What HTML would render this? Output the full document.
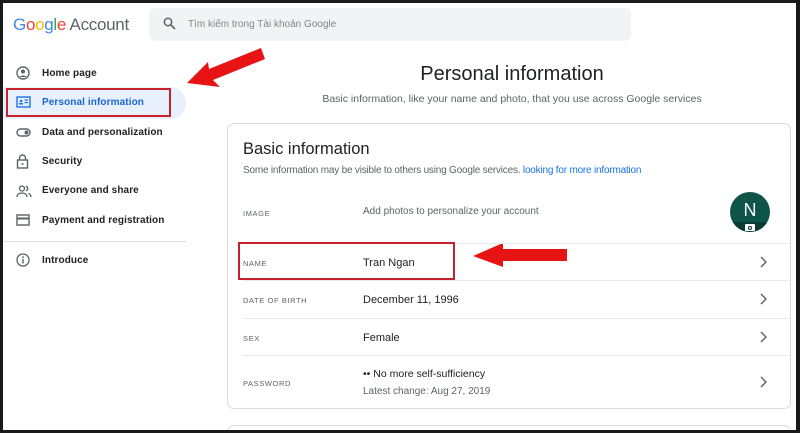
<!DOCTYPE html>
<html><head><meta charset="utf-8"><style>
*{margin:0;padding:0;box-sizing:border-box}
body{width:800px;height:433px;background:#1a1a1a;position:relative;overflow:hidden;font-family:"Liberation Sans",Arial,sans-serif;color:#202124}
#pg{position:absolute;left:3px;top:3px;width:793px;height:427px;background:#fff;overflow:hidden}
.a{position:absolute;white-space:nowrap}
.nav{position:absolute;left:39px;font-size:10px;color:#202124;font-weight:bold;letter-spacing:.1px}
.ic{position:absolute;left:13px}
.lbl{position:absolute;left:240px;font-size:7.5px;color:#5f6368;letter-spacing:.6px}
.val{position:absolute;left:360px;font-size:11px;color:#202124}
.div{position:absolute;left:240px;width:547px;height:1px;background:#e8eaed}
.chev{position:absolute;left:756px}
</style></head><body><div id="pg">
<div class="a" style="left:10px;top:12px;font-size:17px;letter-spacing:-.3px"><span style="color:#4285f4">G</span><span style="color:#ea4335">o</span><span style="color:#fbbc05">o</span><span style="color:#4285f4">g</span><span style="color:#34a853">l</span><span style="color:#ea4335">e</span> <span style="color:#5f6368">Account</span></div>
<div class="a" style="left:146px;top:5px;width:482px;height:33px;background:#f1f3f4;border-radius:7px"></div>
<svg class="a" style="left:160px;top:14px" width="13" height="13" viewBox="0 0 13 13"><circle cx="5" cy="5" r="3.7" fill="none" stroke="#5f6368" stroke-width="1.5"/><path d="M8 8l4 4" stroke="#5f6368" stroke-width="1.6"/></svg>
<div class="a" style="left:185px;top:16px;font-size:10px;color:#80868b">Tìm kiếm trong Tài khoản Google</div>

<div class="a" style="left:0;top:84px;width:183px;height:32px;background:#e8f0fe;border-radius:0 16px 16px 0"></div>
<div class="a" style="left:3px;top:85px;width:165px;height:29px;border:2px solid #c5222e"></div>

<svg class="ic" style="top:63px" width="14" height="14" viewBox="0 0 14 14"><circle cx="7" cy="7" r="6" fill="none" stroke="#5f6368" stroke-width="1.4"/><circle cx="7" cy="5.5" r="2" fill="#5f6368"/><path d="M3.5 11c1-2 6-2 7 0" fill="#5f6368"/></svg>
<div class="nav" style="top:65px">Home page</div>
<svg class="ic" style="top:93px" width="15" height="12" viewBox="0 0 15 12"><rect x="1" y="1" width="13" height="10" fill="none" stroke="#1a73e8" stroke-width="1.4"/><circle cx="5" cy="5" r="1.3" fill="#1a73e8"/><rect x="3" y="7" width="4" height="1.5" fill="#1a73e8"/><rect x="8.5" y="3.5" width="3.5" height="1.2" fill="#1a73e8"/><rect x="8.5" y="6" width="3.5" height="1.2" fill="#1a73e8"/></svg>
<div class="nav" style="top:94px;color:#1967d2">Personal information</div>
<svg class="ic" style="top:125px" width="15" height="9" viewBox="0 0 15 9"><rect x="1" y="1" width="13" height="7" rx="3.5" fill="none" stroke="#5f6368" stroke-width="1.4"/><circle cx="10.5" cy="4.5" r="2" fill="#5f6368"/></svg>
<div class="nav" style="top:124px">Data and personalization</div>
<svg class="ic" style="top:151px" width="13" height="15" viewBox="0 0 13 15"><path d="M3.5 6V4a3 3 0 016 0v2" fill="none" stroke="#5f6368" stroke-width="1.4"/><rect x="1.5" y="6" width="10" height="8" fill="none" stroke="#5f6368" stroke-width="1.4"/><circle cx="6.5" cy="10" r="1" fill="#5f6368"/></svg>
<div class="nav" style="top:153px">Security</div>
<svg class="ic" style="top:182px" width="16" height="13" viewBox="0 0 16 13"><circle cx="6" cy="3.5" r="2.5" fill="none" stroke="#5f6368" stroke-width="1.3"/><path d="M1 12c0-3 2.5-4 5-4s5 1 5 4" fill="none" stroke="#5f6368" stroke-width="1.3"/><path d="M10 1.2a2.4 2.4 0 010 4.6M12.5 8.5c1.5.6 2.5 1.6 2.5 3.5" fill="none" stroke="#5f6368" stroke-width="1.3"/></svg>
<div class="nav" style="top:182px">Everyone and share</div>
<svg class="ic" style="top:211px" width="14" height="12" viewBox="0 0 14 12"><rect x="1" y="1" width="12" height="10" fill="none" stroke="#5f6368" stroke-width="1.4"/><rect x="1" y="3.5" width="12" height="2" fill="#5f6368"/></svg>
<div class="nav" style="top:212px">Payment and registration</div>
<div class="a" style="left:0;top:238px;width:183px;height:1px;background:#dadce0"></div>
<svg class="ic" style="top:250px" width="14" height="14" viewBox="0 0 14 14"><circle cx="7" cy="7" r="6" fill="none" stroke="#5f6368" stroke-width="1.3"/><rect x="6.3" y="6" width="1.4" height="4.5" fill="#5f6368"/><circle cx="7" cy="4.2" r=".9" fill="#5f6368"/></svg>
<div class="nav" style="top:252px">Introduce</div>

<svg class="a" style="left:0;top:0" width="793" height="427"><polygon points="184,80 205,59 206,66 258,45 262,56 210,77 217,84" fill="#e81313"/><polygon points="470,253 500,240 500,246 564,246 564,258 500,258 500,264" fill="#e81313"/></svg>

<div class="a" style="left:0;width:793px;text-align:center;padding-left:225px;top:60px;font-size:20px;color:#202124">Personal information</div>
<div class="a" style="left:0;width:793px;text-align:center;padding-left:225px;top:90px;font-size:10.5px;color:#5f6368">Basic information, like your name and photo, that you use across Google services</div>

<div class="a" style="left:224px;top:120px;width:564px;height:286px;border:1px solid #dadce0;border-radius:7px"></div>
<div class="a" style="left:224px;top:422px;width:564px;height:20px;border:1px solid #dadce0;border-radius:7px"></div>
<div class="a" style="left:240px;top:137px;font-size:16.5px">Basic information</div>
<div class="a" style="left:240px;top:162px;font-size:10px;color:#5f6368;letter-spacing:-.2px">Some information may be visible to others using Google services. <span style="color:#1a73e8">looking for more information</span></div>

<div class="lbl" style="top:206px">IMAGE</div>
<div class="val" style="top:203px;font-size:10px;color:#5f6368">Add photos to personalize your account</div>
<div class="a" style="left:727px;top:189px;width:40px;height:40px;border-radius:50%;background:#0e5448;overflow:hidden;text-align:center;color:#fff;font-size:18px;line-height:36px">N<div style="position:absolute;left:0;bottom:0;width:40px;height:10px;background:#093c33"></div><div style="position:absolute;left:15px;bottom:1px;width:10px;height:7px;background:#fff;border-radius:1px"></div><div style="position:absolute;left:18px;bottom:2px;width:4px;height:4px;border:1px solid #093c33;border-radius:50%"></div></div>
<div class="div" style="top:240px"></div>

<div class="a" style="left:235px;top:239px;width:217px;height:38px;border:2px solid #c5222e"></div>
<div class="lbl" style="top:256px">NAME</div>
<div class="val" style="top:254px">Tran Ngan</div>
<div class="div" style="top:277px"></div>
<div class="lbl" style="top:293px">DATE OF BIRTH</div>
<div class="val" style="top:291px">December 11, 1996</div>
<div class="div" style="top:315px"></div>
<div class="lbl" style="top:331px">SEX</div>
<div class="val" style="top:329px">Female</div>
<div class="div" style="top:352px"></div>
<div class="lbl" style="top:376px">PASSWORD</div>
<div class="val" style="top:365px;font-size:10.5px">•• No more self-sufficiency</div>
<div class="val" style="top:383px;font-size:10px;color:#5f6368">Latest change: Aug 27, 2019</div>

<svg class="chev" style="top:253px" width="8" height="12"><path d="M2 1l5 5-5 5" fill="none" stroke="#5f6368" stroke-width="1.5"/></svg>
<svg class="chev" style="top:290px" width="8" height="12"><path d="M2 1l5 5-5 5" fill="none" stroke="#5f6368" stroke-width="1.5"/></svg>
<svg class="chev" style="top:328px" width="8" height="12"><path d="M2 1l5 5-5 5" fill="none" stroke="#5f6368" stroke-width="1.5"/></svg>
<svg class="chev" style="top:373px" width="8" height="12"><path d="M2 1l5 5-5 5" fill="none" stroke="#5f6368" stroke-width="1.5"/></svg>
</div></body></html>
